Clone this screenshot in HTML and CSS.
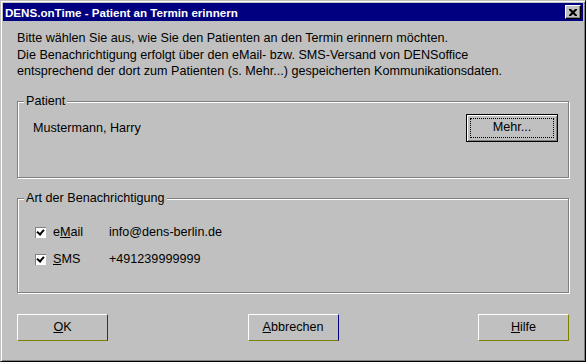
FILE: index.html
```html
<!DOCTYPE html>
<html>
<head>
	<title>DENS.onTime - Patient an Termin erinnern</title>
	<link rel="stylesheet" href="styles.css">
</head>
<body>

	<div class="window">
		<div class="titlebar">
			<span class="title">DENS.onTime - Patient an Termin erinnern</span>
			<span class="close">
				<svg width="8" height="7" viewBox="0 0 8 7">
					<path d="M0 0h2l2 2 2-2h2v1l-2.5 2.5L8 6v1H6L4 5 2 7H0V6l2.5-2.5L0 1z" fill="#000"/>
				</svg>
			</span>
		</div>

		<div class="content">
			<p class="intro">
				Bitte wählen Sie aus, wie Sie den Patienten an den Termin erinnern möchten.<br>
				Die Benachrichtigung erfolgt über den eMail- bzw. SMS-Versand von DENSoffice<br>
				entsprechend der dort zum Patienten (s. Mehr...) gespeicherten Kommunikationsdaten.
			</p>

			<div class="group group-patient">
				<span class="legend">Patient</span>
				<span class="name">Mustermann, Harry</span>
				<span class="btn btn-default"><span class="focus">Mehr...</span></span>
			</div>

			<div class="group group-art">
				<span class="legend">Art der Benachrichtigung</span>
				<div class="row">
					<span class="check"></span>
					<span class="option">e<u>M</u>ail</span>
					<span class="value">info@dens-berlin.de</span>
				</div>
				<div class="row">
					<span class="check"></span>
					<span class="option"><u>S</u>MS</span>
					<span class="value">+491239999999</span>
				</div>
			</div>

			<div class="buttons">
				<span class="btn btn-ok"><u>O</u>K</span>
				<span class="btn btn-cancel"><u>A</u>bbrechen</span>
				<span class="btn btn-help"><u>H</u>ilfe</span>
			</div>
		</div>
	</div>

</body>
</html>
```

FILE: styles.css
```css
body{
	margin: 0;
	background: #c0c0c0;
	font-family: "Liberation Sans", Arial, sans-serif;
	font-size: 12.6px;
	color: #000;
}

.window{
	box-sizing: border-box;
	width: 586px;
	height: 362px;
	padding: 2px;
	background: #c0c0c0;
	border-top: 1px solid #c0c0c0;
	border-left: 1px solid #c0c0c0;
	border-right: 1px solid #000;
	border-bottom: 1px solid #000;
	box-shadow: inset 1px 1px 0 #fff, inset -1px -1px 0 #808080;
	display: flex;
	flex-direction: column;
}

.titlebar{
	height: 18px;
	background: #000080;
	display: flex;
	align-items: center;
	justify-content: space-between;
	padding: 0 2px;
}

.title{
	color: #fff;
	font-weight: bold;
	font-size: 11.6px;
}

.close{
	box-sizing: border-box;
	width: 16px;
	height: 14px;
	background: #c0c0c0;
	border-top: 1px solid #fff;
	border-left: 1px solid #fff;
	border-right: 1px solid #000;
	border-bottom: 1px solid #000;
	box-shadow: inset -1px -1px 0 #808080;
	display: flex;
	align-items: center;
	justify-content: center;
}

.content{
	padding: 9px 14px 0 14px;
	line-height: 16.5px;
}

.intro{
	margin: 0;
}

.group{
	position: relative;
	border: 1px solid #808080;
	box-shadow: inset 1px 1px 0 #fff, 1px 1px 0 #fff;
}

.legend{
	position: absolute;
	left: 6px;
	top: -9px;
	padding: 0 2px;
	background: #c0c0c0;
}

.group-patient{
	margin-top: 21px;
	height: 75px;
	display: flex;
	align-items: flex-start;
	justify-content: space-between;
}

.group-patient .name{
	margin: 18px 0 0 15px;
}

.group-patient .btn-default{
	margin: 12px 10px 0 0;
}

.btn{
	box-sizing: border-box;
	width: 91px;
	height: 27px;
	display: flex;
	align-items: center;
	justify-content: center;
	border-top: 1px solid #fff;
	border-left: 1px solid #fff;
	border-bottom: 1px solid #808000;
	border-right: 1px solid #808080;
}

.btn-default{
	width: 92px;
	height: 28px;
	padding: 3px;
	border: 1px solid #000;
	box-shadow: inset 1px 1px 0 #fff, inset -1px -1px 0 #808080;
}

.focus{
	flex: 1;
	align-self: stretch;
	display: flex;
	align-items: center;
	justify-content: center;
	border: 1px dotted #000;
}

.group-art{
	margin-top: 20px;
	height: 93px;
}

.row{
	display: flex;
	align-items: center;
	height: 16px;
	margin-left: 17px;
}

.row:first-of-type{
	margin-top: 26px;
}

.row + .row{
	margin-top: 11px;
}

.check{
	box-sizing: border-box;
	width: 11px;
	height: 11px;
	background: #fff;
	border-top: 1px solid #808080;
	border-left: 1px solid #808080;
	position: relative;
}

.check::after{
	content: "";
	position: absolute;
	left: 2px;
	top: 0;
	width: 3px;
	height: 5px;
	border-right: 2px solid #000;
	border-bottom: 2px solid #000;
	transform: rotate(40deg);
}

.option{
	margin-left: 7px;
	width: 56px;
}

.buttons{
	margin-top: 21px;
	display: flex;
	justify-content: space-between;
}

.btn-ok{
	border-right-color: #800080;
}

.btn-cancel{
	border-right-color: #000080;
}

.btn-help{
	border-right-color: #808000;
}
```
